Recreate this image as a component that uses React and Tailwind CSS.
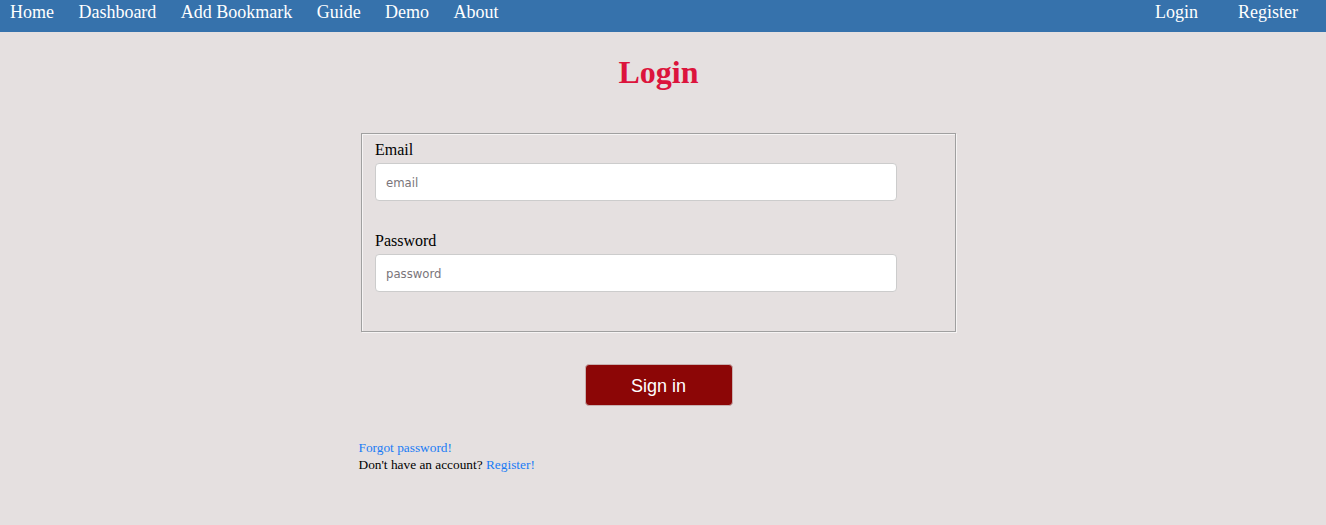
import React from "react";

const serif = { fontFamily: '"Liberation Serif", "Times New Roman", serif' };

export default function App() {
  const left = ["Home", "Dashboard", "Add Bookmark", "Guide", "Demo", "About"];
  return (
    <div className="min-h-[525px] w-full bg-[#e5e0e0] font-['Liberation_Serif',serif]">
      <nav className="flex h-[32px] w-full items-start justify-between bg-[#3672ac] text-[18px] leading-[20px] text-white">
        <div className="flex gap-[4.4px] pt-[2px]">
          {left.map((t) => (
            <a key={t} href="#" className="px-[10px]">
              {t}
            </a>
          ))}
        </div>
        <div className="flex pr-[8px] pt-[2px]">
          <a href="#" className="px-[20px]">Login</a>
          <a href="#" className="px-[20px]">Register</a>
        </div>
      </nav>
      <div className="flex w-[1317px] flex-col items-center">
        <h1 className="mt-[22px] text-[32px] font-bold leading-[37px] text-[#dc143c]">Login</h1>
        <div className="mt-[42px] w-[600px]">
          <fieldset className="mx-[2.5px] w-[595px] border border-[#a0a0a0] px-[13px] pb-[11px] pt-[7px] shadow-[inset_1px_1px_0_#f6f4f4,1px_1px_0_#f6f4f4]">
            <div className="mb-[31px]">
              <label className="mb-[4px] block text-[16px] leading-[18px] text-black">Email</label>
              <input
                type="text"
                placeholder="email"
                className="block h-[38px] w-[522px] rounded-[4px] border border-[#cccccc] bg-white px-[10px] font-['DejaVu_Sans_Condensed','DejaVu_Sans',sans-serif] text-[13px] outline-none placeholder:text-[#7a757a]"
              />
            </div>
            <div className="mb-[28px]">
              <label className="mb-[4px] block text-[16px] leading-[18px] text-black">Password</label>
              <input
                type="password"
                placeholder="password"
                className="block h-[38px] w-[522px] rounded-[4px] border border-[#cccccc] bg-white px-[10px] font-['DejaVu_Sans_Condensed','DejaVu_Sans',sans-serif] text-[13px] outline-none placeholder:text-[#7a757a]"
              />
            </div>
          </fieldset>
          <div className="mt-[32px] flex justify-center">
            <button className="h-[42px] w-[148px] rounded-[4px] border border-[#c8b0b0] bg-[#8c0606] pt-[2px] font-['Liberation_Sans',Arial,sans-serif] text-[18px] text-white">
              Sign in
            </button>
          </div>
          <div className="mt-[34px] text-[13.33px] leading-[16.6px] text-black" style={serif}>
            <a href="#" className="text-[#1a7cf5]">Forgot password!</a>
            <br />
            Don't have an account? <a href="#" className="text-[#1a7cf5]">Register!</a>
          </div>
        </div>
      </div>
    </div>
  );
}
